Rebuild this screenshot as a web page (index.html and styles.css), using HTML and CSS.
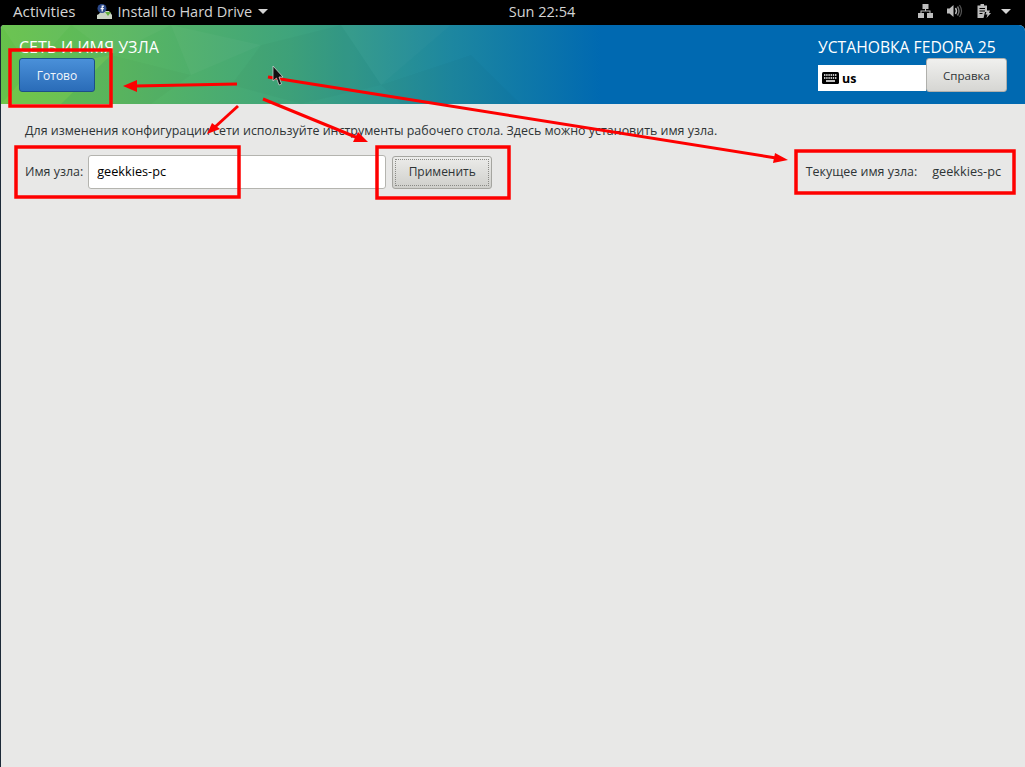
FILE: index.html
```html
<!DOCTYPE html>
<html lang="ru">
<head>
    <meta charset="UTF-8">
    <title>Сеть и имя узла</title>
    <link rel="stylesheet" href="styles.css">
</head>
<body>
    <div class="topbar">
        <div class="topbar-left">
            <span class="activities">Activities</span>
            <span class="app-menu">
                <svg class="app-icon" width="15" height="15" viewBox="0 0 15 15">
                    <path d="M2 10 L4 7 H12 L15 11 V15 H0 V11 Z" fill="#c9d3c4"/>
                    <circle cx="5" cy="4.5" r="4.5" fill="#2c4a8c"/>
                    <path d="M7 2.2 H5.2 V7.5 M3.6 4.6 H6.8" stroke="#fff" stroke-width="1.2" fill="none"/>
                    <path d="M8 8 H14 L11 12 Z" fill="#5fae3c"/>
                </svg>
                <span>Install to Hard Drive</span>
                <span class="caret"></span>
            </span>
        </div>
        <div class="clock">Sun 22:54</div>
        <div class="status-icons">
            <svg width="15" height="14" viewBox="0 0 15 14" fill="#bdbdbd">
                <rect x="4.5" y="0" width="6" height="5"/>
                <rect x="0" y="9" width="6" height="5"/>
                <rect x="9" y="9" width="6" height="5"/>
                <path d="M7 5 H8 V6.5 H12.5 V9 H11.5 V7.5 H3.5 V9 H2.5 V6.5 H7 Z"/>
            </svg>
            <svg width="16" height="14" viewBox="0 0 16 14" fill="none">
                <path d="M0 4.5 H2.5 L6.5 1 V13 L2.5 9.5 H0 Z" fill="#bdbdbd"/>
                <path d="M8.5 4 Q10.5 7 8.5 10" stroke="#bdbdbd" stroke-width="1.4"/>
                <path d="M10.5 2.5 Q13.5 7 10.5 11.5" stroke="#777" stroke-width="1.4"/>
                <path d="M12.5 1 Q16.5 7 12.5 13" stroke="#555" stroke-width="1.2"/>
            </svg>
            <svg width="14" height="14" viewBox="0 0 14 14" fill="none">
                <path d="M3.5 0 H7 V1.5 H10 V8 H8 L6.5 14 H0.5 V1.5 H3.5 Z" fill="#bdbdbd"/>
                <path d="M2.5 4.5 H8 M2.5 7 H8 M2.5 9.5 H5.5" stroke="#000" stroke-width="1.1"/>
                <path d="M10 6.5 H13 L12 9 H14 L9.5 14 L10.5 10.5 H8.5 Z" fill="#bdbdbd"/>
            </svg>
            <span class="caret"></span>
        </div>
    </div>

    <div class="window">
        <div class="header">
            <svg class="header-art" width="600" height="79" viewBox="0 0 600 79">
                <polygon points="0,0 70,0 30,45" fill="#fff" opacity="0.04"/>
                <polygon points="30,45 110,30 60,79 0,79" fill="#b6e04a" opacity="0.14"/>
                <polygon points="70,0 170,0 110,30" fill="#fff" opacity="0.03"/>
                <polygon points="110,30 190,50 150,79 60,79" fill="#000" opacity="0.02"/>
                <polygon points="170,0 260,20 190,50" fill="#fff" opacity="0.03"/>
                <polygon points="260,20 340,0 380,60 300,79 230,60" fill="#000" opacity="0.02"/>
                <polygon points="340,0 450,0 380,60" fill="#fff" opacity="0.02"/>
                <polygon points="380,60 470,30 520,79 400,79" fill="#000" opacity="0.02"/>
            </svg>
            <div class="header-left">
                <div class="spoke-title">СЕТЬ И ИМЯ УЗЛА</div>
                <button class="btn-done">Готово</button>
            </div>
            <div class="header-right">
                <div class="product-title">УСТАНОВКА FEDORA 25</div>
                <div class="header-controls">
                    <div class="layout-box">
                        <svg width="17" height="12" viewBox="0 0 17 12">
                            <rect width="17" height="12" rx="1.5" fill="#000"/>
                            <path d="M2 3 H15 M2 6 H15" stroke="#fff" stroke-width="1.4" stroke-dasharray="1.4 .8"/>
                            <path d="M4 9 H13" stroke="#fff" stroke-width="1.4"/>
                        </svg>
                        <span>us</span>
                    </div>
                    <button class="btn-help">Справка</button>
                </div>
            </div>
        </div>

        <div class="content">
            <p class="hint">Для изменения конфигурации сети используйте инструменты рабочего стола. Здесь можно установить имя узла.</p>
            <div class="host-row">
                <label class="host-label">Имя узла:</label>
                <input class="host-input" type="text" value="geekkies-pc">
                <button class="btn-apply"><span>Применить</span></button>
                <div class="current-host">
                    <span>Текущее имя узла:</span>
                    <span class="host-value">geekkies-pc</span>
                </div>
            </div>
        </div>
    </div>

    <!-- annotations drawn over the screenshot -->
    <svg class="marks" width="1025" height="767" viewBox="0 0 1025 767">
        <g fill="none" stroke="#fe0000" stroke-width="3.5">
            <rect x="10" y="50" width="101" height="56"/>
            <rect x="16" y="147" width="223" height="50"/>
            <rect x="377" y="147" width="132" height="51"/>
            <rect x="796" y="151" width="218" height="42"/>
        </g>
        <g fill="none" stroke="#fe0000" stroke-width="3">
            <path d="M237 84 L135 86"/>
            <path d="M238 106 L215 127"/>
            <path d="M263 99 L358 138"/>
            <path d="M268 77 L776 158"/>
        </g>
        <g fill="#fe0000">
            <polygon points="123,86 137,80 137,92"/>
            <polygon points="207,134 212,123 220,129"/>
            <polygon points="368,142 353,142 358,132"/>
            <polygon points="788,160 775,153 773,163"/>
        </g>
        <path d="M273 66 V81 L276.5 78 L279 85 L281.5 84 L279 77 H283 Z" fill="#111" stroke="#ddd" stroke-width="0.7"/>
    </svg>
</body>
</html>
```

FILE: styles.css
```css
* {
    box-sizing: border-box;
}
html, body {
    height: 100%;
}
body {
    margin: 0;
    background: #000;
    font-family: "Open Sans", "Noto Sans", sans-serif;
    font-size: 12.44px;
    color: #2e3436;
    overflow: hidden;
    display: flex;
    flex-direction: column;
}
button {
    font-family: inherit;
}
.topbar {
    height: 25px;
    background: #000;
    color: #d4d4d4;
    font-size: 14.5px;
    display: grid;
    grid-template-columns: 1fr auto 1fr;
    align-items: center;
    padding: 0 14px 3px 13px;
}
.topbar-left {
    display: flex;
    align-items: center;
    gap: 21px;
}
.activities {
    font-size: 15.2px;
}
.app-menu {
    display: flex;
    align-items: center;
    gap: 6px;
}
.caret {
    width: 0;
    height: 0;
    border-left: 5px solid transparent;
    border-right: 5px solid transparent;
    border-top: 5px solid #d4d4d4;
}
.clock {
    margin-left: 60px;
}
.status-icons {
    display: flex;
    align-items: center;
    justify-content: flex-end;
    gap: 14px;
}
.status-icons .caret {
    margin-left: -4px;
}
.window {
    flex: 1;
    display: flex;
    flex-direction: column;
    background: #e8e8e7;
    border-left: 1px solid #1c2a38;
    border-radius: 4px 6px 0 0;
    overflow: hidden;
}
.header {
    position: relative;
    height: 79px;
    flex: none;
    display: flex;
    justify-content: space-between;
    padding: 13px 18px 0 18px;
    color: #fff;
    background: linear-gradient(90deg, #66c24a 0, #5ab760 120px, #3fa47c 290px, #1d87a0 450px, #0069b1 600px, #0069b1 100%);
}
.header-art {
    position: absolute;
    left: 0;
    top: 0;
}
.header-left, .header-right {
    position: relative;
}
.spoke-title {
    font-size: 16px;
    line-height: 18px;
}
.product-title {
    font-size: 15.7px;
    line-height: 18px;
}
.btn-done {
    display: block;
    width: 76px;
    height: 34px;
    margin-top: 2px;
    padding: 0;
    color: #f2f6fb;
    font-size: 12px;
    border: 1px solid #1d4f86;
    border-radius: 3px;
    background: linear-gradient(#4a90d9, #2a6cb8);
}
.header-right {
    display: flex;
    flex-direction: column;
    align-items: flex-start;
}
.header-controls {
    display: flex;
    align-items: flex-start;
    margin-top: 2px;
}
.layout-box {
    width: 108px;
    height: 26px;
    margin-top: 7px;
    background: #fff;
    color: #000;
    font-weight: bold;
    display: flex;
    align-items: center;
    gap: 3px;
    padding-left: 4px;
}
.btn-help {
    width: 81px;
    height: 34px;
    padding: 0;
    color: #2e3436;
    font-size: 11.6px;
    border: 1px solid #b0b0ac;
    border-radius: 3px;
    background: linear-gradient(#f0f0ee, #d6d6d3);
}
.content {
    padding: 19px 24px 0 24px;
}
.hint {
    margin: 0;
    line-height: 16px;
}
.host-row {
    display: flex;
    align-items: center;
    margin-top: 16px;
}
.host-label {
    margin-right: 5px;
    padding-bottom: 2px;
}
.host-input {
    width: 298px;
    height: 34px;
    padding: 0 8px 2px;
    font-family: inherit;
    font-size: 12.7px;
    color: #000;
    background: #fff;
    border: 1px solid #b4b4af;
    border-radius: 3px;
    outline: none;
}
.btn-apply {
    width: 100px;
    height: 33px;
    margin-left: 6px;
    padding: 2px;
    color: #2e3436;
    font-size: 12px;
    border: 1px solid #a5a5a0;
    border-radius: 3px;
    background: linear-gradient(#ececea, #cfcfcb);
}
.btn-apply span {
    display: flex;
    align-items: center;
    justify-content: center;
    height: 100%;
    padding-bottom: 2px;
    border: 1px dotted #8a8a86;
}
.current-host {
    margin-left: auto;
    display: flex;
    align-items: baseline;
    gap: 15px;
    padding-bottom: 2px;
}
.host-value {
    font-size: 12.7px;
}
.marks {
    position: absolute;
    left: 0;
    top: 0;
    pointer-events: none;
}
```
